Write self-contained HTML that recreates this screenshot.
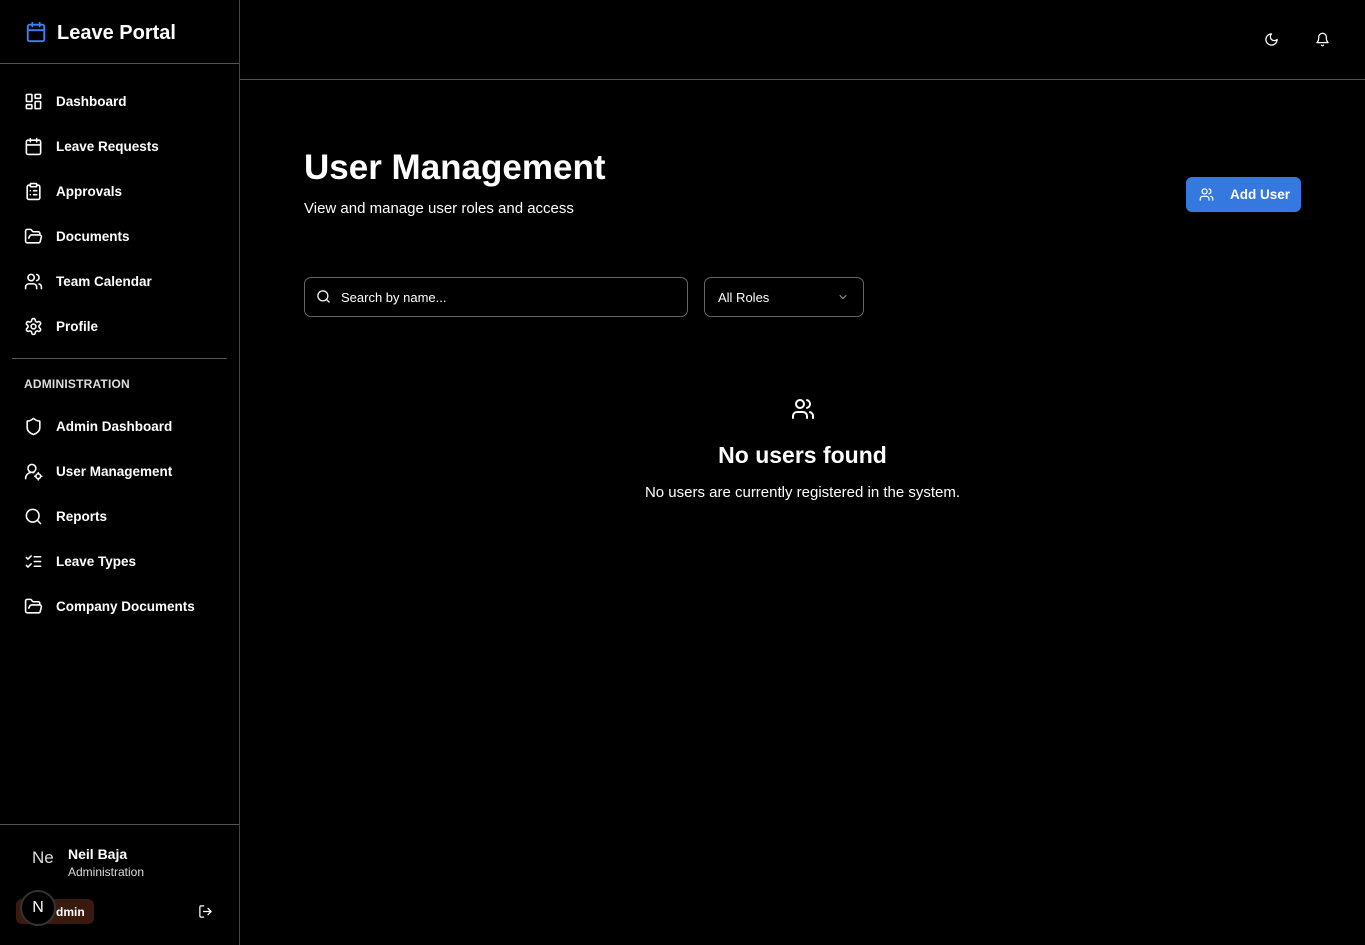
<!DOCTYPE html>
<html><head><meta charset="utf-8"><style>
*{box-sizing:border-box;margin:0;padding:0}
body{width:1365px;height:945px;background:#000;color:#fff;font-family:"Liberation Sans",sans-serif;position:relative;overflow:hidden}
.side{position:absolute;left:0;top:0;width:240px;height:945px;border-right:1px solid #444}
.logo{height:64px;border-bottom:1px solid #555;display:flex;align-items:center;padding:4px 0 0 25px;font-size:20px;font-weight:bold}
.logo svg{margin-right:10px;margin-top:-3px}
.nav a{display:flex;align-items:center;height:45px;padding-left:24px;font-size:13.5px;font-weight:bold;color:#fff;text-decoration:none}
.nav a svg{margin-right:13px;flex:none}
svg{fill:none;stroke:#fff;stroke-width:2;stroke-linecap:round;stroke-linejoin:round}
.sep{margin:9px 12px 0;border-top:1px solid #555}
.hdr{font-size:12px;font-weight:bold;color:#ddd;padding:18px 0 13px 24px;letter-spacing:.2px}
.top{position:absolute;left:240px;top:0;right:0;height:80px;border-bottom:1px solid #555}
.foot{position:absolute;left:0;top:824px;width:239px;border-top:1px solid #555;height:121px}
</style></head><body>
<div class="side">
<div class="logo"><svg width="22" height="22" viewBox="0 0 24 24" style="stroke:#3b82f6"><rect x="3" y="4" width="18" height="18" rx="2"/><path d="M16 2v4M8 2v4M3 10h18"/></svg>Leave Portal</div>
<div class="nav" style="padding-top:15px">
<a><svg width="19" height="19" viewBox="0 0 24 24"><rect x="3" y="3" width="7" height="9" rx="1"/><rect x="14" y="3" width="7" height="5" rx="1"/><rect x="14" y="12" width="7" height="9" rx="1"/><rect x="3" y="16" width="7" height="5" rx="1"/></svg>Dashboard</a>
<a><svg width="19" height="19" viewBox="0 0 24 24"><rect x="3" y="4" width="18" height="18" rx="2"/><path d="M16 2v4M8 2v4M3 10h18"/></svg>Leave Requests</a>
<a><svg width="19" height="19" viewBox="0 0 24 24"><rect x="8" y="2" width="8" height="4" rx="1"/><path d="M16 4h2a2 2 0 0 1 2 2v14a2 2 0 0 1-2 2H6a2 2 0 0 1-2-2V6a2 2 0 0 1 2-2h2M12 11h4M12 16h4M8 11h.01M8 16h.01"/></svg>Approvals</a>
<a><svg width="19" height="19" viewBox="0 0 24 24"><path d="m6 14 1.5-2.9A2 2 0 0 1 9.2 10H20a2 2 0 0 1 1.9 2.5l-1.5 6A2 2 0 0 1 18.5 20H4a2 2 0 0 1-2-2V5a2 2 0 0 1 2-2h3.9a2 2 0 0 1 1.7.9l.8 1.2a2 2 0 0 0 1.7.9H18a2 2 0 0 1 2 2v2"/></svg>Documents</a>
<a><svg width="19" height="19" viewBox="0 0 24 24"><path d="M16 21v-2a4 4 0 0 0-4-4H6a4 4 0 0 0-4 4v2"/><circle cx="9" cy="7" r="4"/><path d="M22 21v-2a4 4 0 0 0-3-3.87M16 3.13a4 4 0 0 1 0 7.75"/></svg>Team Calendar</a>
<a><svg width="19" height="19" viewBox="0 0 24 24"><path d="M12.22 2h-.44a2 2 0 0 0-2 2v.18a2 2 0 0 1-1 1.73l-.43.25a2 2 0 0 1-2 0l-.15-.08a2 2 0 0 0-2.73.73l-.22.38a2 2 0 0 0 .73 2.730l.15.1a2 2 0 0 1 1 1.72v.51a2 2 0 0 1-1 1.74l-.15.09a2 2 0 0 0-.73 2.73l.22.38a2 2 0 0 0 2.73.73l.15-.08a2 2 0 0 1 2 0l.43.25a2 2 0 0 1 1 1.73V20a2 2 0 0 0 2 2h.44a2 2 0 0 0 2-2v-.18a2 2 0 0 1 1-1.73l.43-.25a2 2 0 0 1 2 0l.15.08a2 2 0 0 0 2.73-.73l.22-.39a2 2 0 0 0-.73-2.73l-.15-.08a2 2 0 0 1-1-1.74v-.5a2 2 0 0 1 1-1.74l.15-.09a2 2 0 0 0 .73-2.73l-.22-.38a2 2 0 0 0-2.73-.73l-.15.08a2 2 0 0 1-2 0l-.43-.25a2 2 0 0 1-1-1.73V4a2 2 0 0 0-2-2z"/><circle cx="12" cy="12" r="3"/></svg>Profile</a>
</div>
<div class="sep"></div>
<div class="hdr">ADMINISTRATION</div>
<div class="nav">
<a><svg width="19" height="19" viewBox="0 0 24 24"><path d="M20 13c0 5-3.5 7.5-7.66 8.95a1 1 0 0 1-.67-.01C7.5 20.5 4 18 4 13V6a1 1 0 0 1 1-1c2 0 4.5-1.2 6.240-2.72a1.17 1.17 0 0 1 1.52 0C14.51 3.81 17 5 19 5a1 1 0 0 1 1 1z"/></svg>Admin Dashboard</a>
<a><svg width="19" height="19" viewBox="0 0 24 24"><path d="M2 21a8 8 0 0 1 10.4-7.6"/><circle cx="10" cy="8" r="5"/><circle cx="18" cy="18" r="3"/><path d="M18 13.5v1.5M18 21v1.5M22.5 18H21M15 18h-1.5"/></svg>User Management</a>
<a><svg width="19" height="19" viewBox="0 0 24 24"><circle cx="11" cy="11" r="8"/><path d="m21 21-4.3-4.3"/></svg>Reports</a>
<a><svg width="19" height="19" viewBox="0 0 24 24"><path d="m3 7 2 2 4-4M3 17l2 2 4-4M13 6h8M13 12h8M13 18h8"/></svg>Leave Types</a>
<a><svg width="19" height="19" viewBox="0 0 24 24"><path d="m6 14 1.5-2.9A2 2 0 0 1 9.2 10H20a2 2 0 0 1 1.9 2.5l-1.5 6A2 2 0 0 1 18.5 20H4a2 2 0 0 1-2-2V5a2 2 0 0 1 2-2h3.9a2 2 0 0 1 1.7.9l.8 1.2a2 2 0 0 0 1.7.9H18a2 2 0 0 1 2 2v2"/></svg>Company Documents</a>
</div>
<div class="foot">
<div style="position:absolute;left:32px;top:23px;font-size:17px;color:#ddd">Ne</div>
<div style="position:absolute;left:68px;top:21px;font-size:14px;font-weight:bold">Neil Baja</div>
<div style="position:absolute;left:68px;top:40px;font-size:12px;color:#ddd">Administration</div>
<div style="position:absolute;left:16px;top:74px;width:78px;height:25px;background:#3a1a0c;border-radius:6px;font-size:12px;font-weight:bold;padding:6px 0 0 40px">dmin</div>
<div style="position:absolute;left:20px;top:65px;width:36px;height:36px;border-radius:50%;background:#000;border:2px solid #333;font-size:16px;text-align:center;line-height:32px">N</div>
<svg style="position:absolute;left:198px;top:79px" width="15" height="15" viewBox="0 0 24 24"><path d="M9 21H5a2 2 0 0 1-2-2V5a2 2 0 0 1 2-2h4M16 17l5-5-5-5M21 12H9"/></svg>
</div>
</div>
<div class="top">
<svg style="position:absolute;left:1024px;top:32px" width="15" height="15" viewBox="0 0 24 24"><path d="M12 3a6 6 0 0 0 9 9 9 9 0 1 1-9-9Z"/></svg>
<svg style="position:absolute;left:1075px;top:32px" width="15" height="15" viewBox="0 0 24 24"><path d="M10.3 21a1.94 1.94 0 0 0 3.4 0M6 8a6 6 0 0 1 12 0c0 7 3 9 3 9H3s3-2 3-9"/></svg>
</div>
<div style="position:absolute;left:304px;top:148px;font-size:35px;font-weight:bold">User Management</div>
<div style="position:absolute;left:304px;top:200px;font-size:15px">View and manage user roles and access</div>
<div style="position:absolute;left:1186px;top:177px;width:115px;height:35px;background:#3578e0;border-radius:6px;font-size:13.5px;font-weight:bold;padding:10px 0 0 44px">Add User</div>
<svg style="position:absolute;left:1199px;top:187px" width="15" height="15" viewBox="0 0 24 24"><path d="M16 21v-2a4 4 0 0 0-4-4H6a4 4 0 0 0-4 4v2"/><circle cx="9" cy="7" r="4"/><path d="M22 21v-2a4 4 0 0 0-3-3.87M16 3.13a4 4 0 0 1 0 7.75"/></svg>
<div style="position:absolute;left:304px;top:277px;width:384px;height:40px;border:1px solid #666;border-radius:7px;font-size:13px;padding:12px 0 0 36px">Search by name...</div>
<svg style="position:absolute;left:316px;top:289px" width="15" height="15" viewBox="0 0 24 24"><circle cx="11" cy="11" r="8"/><path d="m21 21-4.3-4.3"/></svg>
<div style="position:absolute;left:704px;top:277px;width:160px;height:40px;border:1px solid #666;border-radius:7px;font-size:13px;padding:12px 0 0 13px">All Roles</div>
<svg style="position:absolute;left:837px;top:291px;stroke:#999" width="12" height="12" viewBox="0 0 24 24"><path d="m6 9 6 6 6-6"/></svg>
<svg style="position:absolute;left:791px;top:397px" width="24" height="24" viewBox="0 0 24 24" stroke-width="1.6"><path d="M16 21v-2a4 4 0 0 0-4-4H6a4 4 0 0 0-4 4v2"/><circle cx="9" cy="7" r="4"/><path d="M22 21v-2a4 4 0 0 0-3-3.87M16 3.13a4 4 0 0 1 0 7.75"/></svg>
<div style="position:absolute;left:240px;width:1125px;top:442px;text-align:center;font-size:23px;font-weight:bold">No users found</div>
<div style="position:absolute;left:240px;width:1125px;top:484px;text-align:center;font-size:15px">No users are currently registered in the system.</div>
</body></html>
